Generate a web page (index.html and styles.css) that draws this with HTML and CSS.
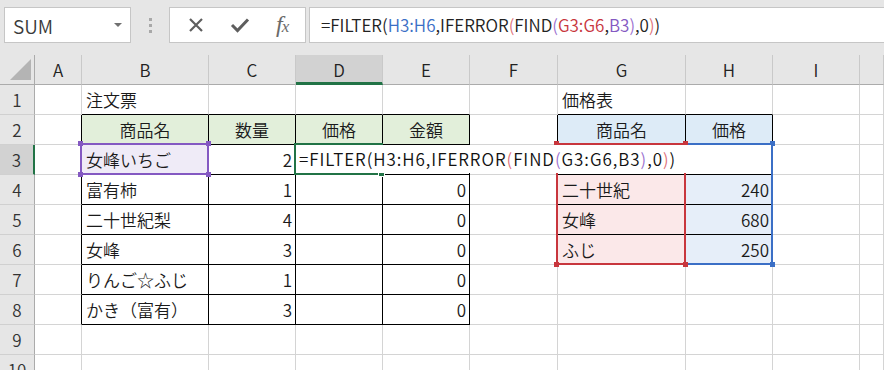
FILE: index.html
```html
<!DOCTYPE html>
<html lang="ja">

<head>
  <meta charset="UTF-8">
  <meta name="viewport" content="width=device-width, initial-scale=1">
  <title>FILTER 関数 - 価格表</title>
  <link rel="stylesheet" href="styles.css">
</head>

<body>

  <!-- name box + formula bar -->
  <div class="toolbar">
    <div class="namebox">
      <span>SUM</span>
      <span class="caret"></span>
    </div>
    <div class="grip"><i></i><i></i><i></i></div>
    <div class="fxbox">
      <svg class="ico" width="18" height="18" viewBox="0 0 18 18">
        <path d="M3 3 L15 15 M15 3 L3 15" stroke="#5e5e5e" stroke-width="2.2" fill="none" />
      </svg>
      <svg class="ico" width="20" height="18" viewBox="0 0 20 18">
        <path d="M2 9 L7.5 14.5 L18 3.5" stroke="#5e5e5e" stroke-width="3" fill="none" />
      </svg>
      <span class="fx">f<small>x</small></span>
    </div>
    <div class="formula">
      =FILTER(<span class="r-blue">H3:H6</span>,IFERROR<span class="p2">(</span>FIND<span class="p3">(</span><span class="r-red">G3:G6</span>,<span class="r-purple">B3</span><span class="p3">)</span>,0<span class="p2">)</span>)
    </div>
  </div>

  <!-- the sheet -->
  <div class="sheet">
    <div class="grid">
      <!-- column headers -->
      <div class="corner"><span class="tri"></span></div>
      <div class="ch">A</div>
      <div class="ch">B</div>
      <div class="ch">C</div>
      <div class="ch on">D</div>
      <div class="ch">E</div>
      <div class="ch">F</div>
      <div class="ch">G</div>
      <div class="ch">H</div>
      <div class="ch">I</div>
      <div class="ch"></div>

      <!-- 1 -->
      <div class="rh">1</div>
      <div class="c"></div>
      <div class="c bb">注文票</div>
      <div class="c bb"></div>
      <div class="c bb"></div>
      <div class="c bb"></div>
      <div class="c"></div>
      <div class="c bb">価格表</div>
      <div class="c bb"></div>
      <div class="c"></div>
      <div class="c"></div>

      <!-- 2 -->
      <div class="rh">2</div>
      <div class="c br"></div>
      <div class="c t hg mid">商品名</div>
      <div class="c t hg mid">数量</div>
      <div class="c t hg mid">価格</div>
      <div class="c t hg mid">金額</div>
      <div class="c br"></div>
      <div class="c t hb mid">商品名</div>
      <div class="c t hb mid">価格</div>
      <div class="c"></div>
      <div class="c"></div>

      <!-- 3 -->
      <div class="rh on">3</div>
      <div class="c br"></div>
      <div class="c t pu">女峰いちご</div>
      <div class="c t num">2</div>
      <div class="c t"></div>
      <div class="c t"></div>
      <div class="c br"></div>
      <div class="c t"></div>
      <div class="c t"></div>
      <div class="c"></div>
      <div class="c"></div>

      <!-- 4 -->
      <div class="rh">4</div>
      <div class="c br"></div>
      <div class="c t">富有柿</div>
      <div class="c t num">1</div>
      <div class="c t"></div>
      <div class="c t num">0</div>
      <div class="c br"></div>
      <div class="c t pk">二十世紀</div>
      <div class="c t lb num">240</div>
      <div class="c"></div>
      <div class="c"></div>

      <!-- 5 -->
      <div class="rh">5</div>
      <div class="c br"></div>
      <div class="c t">二十世紀梨</div>
      <div class="c t num">4</div>
      <div class="c t"></div>
      <div class="c t num">0</div>
      <div class="c br"></div>
      <div class="c t pk">女峰</div>
      <div class="c t lb num">680</div>
      <div class="c"></div>
      <div class="c"></div>

      <!-- 6 -->
      <div class="rh">6</div>
      <div class="c br"></div>
      <div class="c t">女峰</div>
      <div class="c t num">3</div>
      <div class="c t"></div>
      <div class="c t num">0</div>
      <div class="c br"></div>
      <div class="c t pk">ふじ</div>
      <div class="c t lb num">250</div>
      <div class="c"></div>
      <div class="c"></div>

      <!-- 7 -->
      <div class="rh">7</div>
      <div class="c br"></div>
      <div class="c t">りんご☆ふじ</div>
      <div class="c t num">1</div>
      <div class="c t"></div>
      <div class="c t num">0</div>
      <div class="c"></div>
      <div class="c"></div>
      <div class="c"></div>
      <div class="c"></div>
      <div class="c"></div>

      <!-- 8 -->
      <div class="rh">8</div>
      <div class="c br"></div>
      <div class="c t">かき（富有）</div>
      <div class="c t num">3</div>
      <div class="c t"></div>
      <div class="c t num">0</div>
      <div class="c"></div>
      <div class="c"></div>
      <div class="c"></div>
      <div class="c"></div>
      <div class="c"></div>

      <!-- 9 -->
      <div class="rh">9</div>
      <div class="c"></div>
      <div class="c"></div>
      <div class="c"></div>
      <div class="c"></div>
      <div class="c"></div>
      <div class="c"></div>
      <div class="c"></div>
      <div class="c"></div>
      <div class="c"></div>
      <div class="c"></div>

      <!-- 10 -->
      <div class="rh">10</div>
      <div class="c"></div>
      <div class="c"></div>
      <div class="c"></div>
      <div class="c"></div>
      <div class="c"></div>
      <div class="c"></div>
      <div class="c"></div>
      <div class="c"></div>
      <div class="c"></div>
      <div class="c"></div>
    </div>

    <!-- reference highlights drawn over the grid -->
    <div class="ref ref-purple"><i class="k tl"></i><i class="k tr"></i><i class="k bl"></i><i class="k br2"></i></div>
    <div class="ref ref-blue"><i class="k tr"></i><i class="k br2"></i></div>
    <div class="ref ref-red"><i class="k tl"></i><i class="k tr"></i><i class="k bl"></i><i class="k br2"></i></div>
    <div class="active"><i class="handle"></i></div>

    <!-- in-cell editor for D3 -->
    <div class="editor">=FILTER(H3:H6,IFERROR<span class="p2">(</span>FIND<span class="p3">(</span>G3:G6,B3<span class="p3">)</span>,0<span class="p2">)</span>)</div>
  </div>

</body>

</html>
```

FILE: styles.css
```css
html,
body {
  margin: 0;
  padding: 0;
}

body {
  width: 884px;
  height: 370px;
  overflow: hidden;
  background: #e6e6e6;
  font-family: "Noto Sans CJK JP", "Noto Sans", sans-serif;
  font-weight: 350;
  color: #1a1a1a;
}

/* ---------- toolbar ---------- */

.toolbar {
  display: flex;
  align-items: flex-start;
  height: 55px;
  padding-top: 7px;
  box-sizing: border-box;
}

.namebox {
  display: flex;
  align-items: center;
  justify-content: space-between;
  width: 127px;
  height: 36px;
  margin-left: 4px;
  padding: 0 8px 0 8px;
  box-sizing: border-box;
  background: #fff;
  border: 1px solid #c6c6c6;
  font-size: 19px;
  color: #3a3a3a;
}

.caret {
  width: 0;
  height: 0;
  border-left: 4px solid transparent;
  border-right: 4px solid transparent;
  border-top: 4px solid #707070;
}

.grip {
  display: flex;
  flex-direction: column;
  gap: 3px;
  width: 38px;
  align-items: center;
  padding-top: 11px;
}

.grip i {
  display: block;
  width: 3px;
  height: 3px;
  background: #a8a8a8;
}

.fxbox {
  display: flex;
  align-items: center;
  justify-content: space-around;
  width: 137px;
  height: 36px;
  padding: 0 4px;
  box-sizing: border-box;
  background: #fff;
  border: 1px solid #c6c6c6;
}

.fx {
  font-family: "Liberation Serif", serif;
  font-style: italic;
  font-size: 24px;
  line-height: 24px;
  color: #6a6a6a;
  letter-spacing: -1px;
}

.fx small {
  font-size: 17px;
}

.formula {
  flex: 1;
  height: 36px;
  margin-left: 3px;
  padding-left: 11px;
  box-sizing: border-box;
  background: #fff;
  border: 1px solid #c6c6c6;
  border-right: none;
  font-size: 17px;
  line-height: 33px;
  white-space: nowrap;
  color: #222;
}

.r-blue { color: #3b6fc6; }
.r-red { color: #c8363d; }
.r-purple { color: #8459c2; }
.p2 { color: #e0737a; }
.p3 { color: #9b70cf; }

/* ---------- sheet grid ---------- */

.sheet {
  position: relative;
}

.grid {
  display: grid;
  grid-template-columns: 35px 47px 127px 87px 87px 87px 88px 128px 87px 87px 1fr;
  grid-auto-rows: 30px;
  background: #fff;
}

.grid > div {
  box-sizing: border-box;
  border-right: 1px solid #d4d4d4;
  border-bottom: 1px solid #d4d4d4;
  display: flex;
  align-items: center;
  white-space: nowrap;
  overflow: hidden;
  font-size: 17px;
}

.grid > .corner {
  position: relative;
  background: #e6e6e6;
  border-right: 1px solid #ababab;
  border-bottom: 1px solid #ababab;
}

.tri {
  position: absolute;
  right: 3px;
  bottom: 4px;
  width: 0;
  height: 0;
  border-left: 21px solid transparent;
  border-bottom: 21px solid #b4b4b4;
}

.grid > .ch {
  justify-content: center;
  background: #e6e6e6;
  border-right: 1px solid #c9c9c9;
  border-bottom: 1px solid #ababab;
  color: #222;
}

.grid > .ch.on {
  background: #d2d2d2;
  border-bottom: 3px solid #217346;
  padding-top: 2px;
}

.grid > .rh {
  justify-content: center;
  background: #e6e6e6;
  border-right: 1px solid #ababab;
  border-bottom: 1px solid #d0d0d0;
  color: #333;
}

.grid > .rh.on {
  background: #d2d2d2;
  border-right: 2px solid #217346;
}

.grid > .c {
  padding: 0 4px 0 4px;
}

/* table cells get black right + bottom borders */
.grid > .t {
  border-right-color: #000;
  border-bottom-color: #000;
}

.grid > .bb {
  border-bottom-color: #000;
}

.grid > .br {
  border-right-color: #000;
}

.grid > .mid {
  justify-content: center;
}

.grid > .num {
  justify-content: flex-end;
  padding-right: 3px;
}

.hg { background: #e2efda; }
.hb { background: #ddebf7; }
.pu { background: #efebf7; }
.pk { background: #fbe8e9; }
.lb { background: #e6eef9; }

/* ---------- reference outlines ---------- */

.ref {
  position: absolute;
  box-sizing: border-box;
  border: 2px solid;
}

.ref-purple {
  left: 80px;
  top: 88px;
  width: 129px;
  height: 32px;
  border-color: #8459c2;
}

.ref-red {
  left: 556px;
  top: 88px;
  width: 130px;
  height: 122px;
  border-color: #c8363d;
}

.ref-blue {
  left: 684px;
  top: 88px;
  width: 89px;
  height: 122px;
  border-color: #3b6fc6;
}

.k {
  position: absolute;
  width: 5px;
  height: 5px;
}

.ref-purple .k { background: #8459c2; }
.ref-red .k { background: #c8363d; }
.ref-blue .k { background: #3b6fc6; }

.k.tl { left: -4px; top: -4px; }
.k.tr { right: -4px; top: -4px; }
.k.bl { left: -4px; bottom: -4px; }
.k.br2 { right: -4px; bottom: -4px; }

.active {
  position: absolute;
  left: 294px;
  top: 88px;
  width: 89px;
  height: 32px;
  box-sizing: border-box;
  border: 2px solid #217346;
}

.handle {
  position: absolute;
  right: -4px;
  bottom: -4px;
  width: 5px;
  height: 5px;
  background: #217346;
  border: 1px solid #fff;
}

.editor {
  position: absolute;
  left: 297px;
  top: 90px;
  width: 474px;
  height: 28px;
  padding-left: 2px;
  box-sizing: border-box;
  background: #fff;
  font-size: 17px;
  letter-spacing: 0.95px;
  line-height: 28px;
  white-space: nowrap;
  color: #111;
}
```
